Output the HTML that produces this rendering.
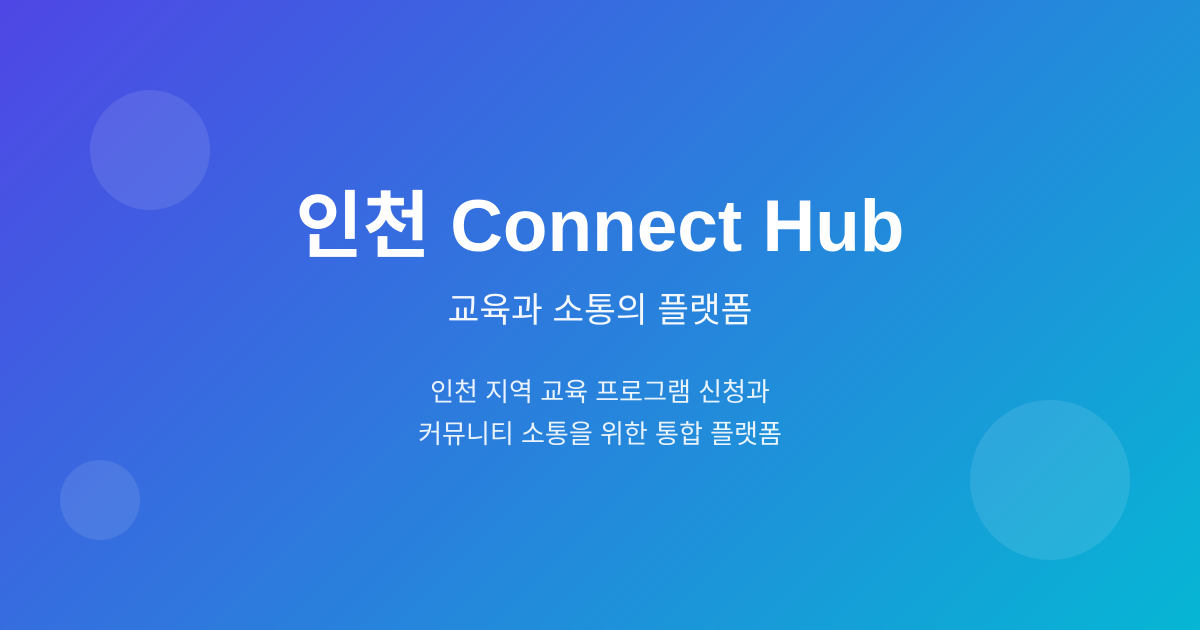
<!DOCTYPE html>
<html><head><meta charset="utf-8"><style>
html,body{margin:0;padding:0}
body{width:1200px;height:630px;overflow:hidden;position:relative;
background:linear-gradient(135deg,#4f46e5 0%,#06b6d4 100%);
font-family:"Liberation Sans","Noto Sans CJK KR","NanumGothic",sans-serif;color:#fff}
.c{position:absolute;border-radius:50%;background:rgba(255,255,255,0.1)}
.t{position:absolute;left:0;width:1200px;text-align:center}
</style></head><body>
<div class="c" style="left:90px;top:90px;width:120px;height:120px"></div>
<div class="c" style="left:60px;top:460px;width:80px;height:80px"></div>
<div class="c" style="left:970px;top:400px;width:160px;height:160px"></div>
<div class="t" style="top:184px;font-size:73px;font-weight:bold;line-height:86px">인천 Connect Hub</div>
<div class="t" style="top:290px;font-size:34.5px;line-height:42px;opacity:.95">교육과 소통의 플랫폼</div>
<div class="t" style="top:371px;font-size:26px;line-height:42px;opacity:.9">인천 지역 교육 프로그램 신청과<br>커뮤니티 소통을 위한 통합 플랫폼</div>
</body></html>
